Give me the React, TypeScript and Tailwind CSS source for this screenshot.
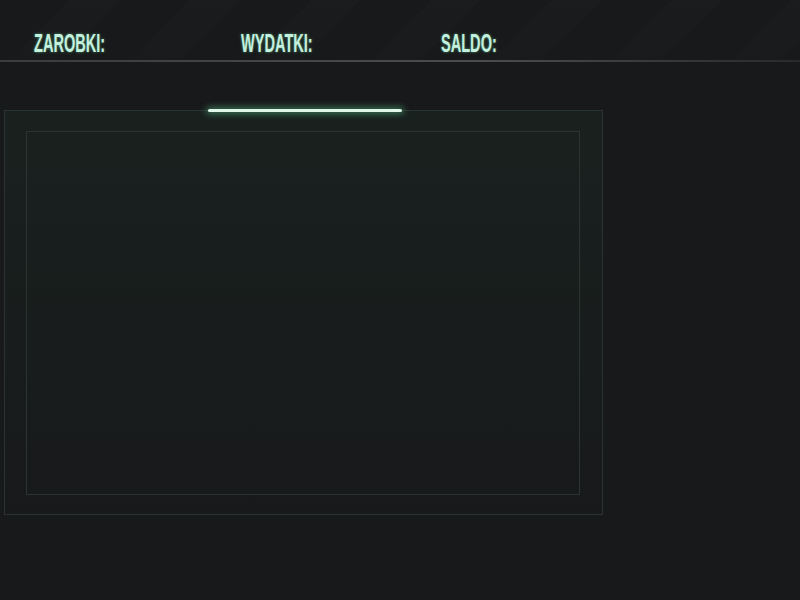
import React from "react";

const labels = [
  { text: "ZAROBKI:", w: "w-[207px]" },
  { text: "WYDATKI:", w: "w-[200px]" },
  { text: "SALDO:", w: "w-[200px]" },
];

export default function App() {
  return (
    <div className="w-[800px] h-[600px] bg-[#18191a] overflow-hidden">
      <header className="relative h-[60px] flex items-start pl-[34px] pt-[30px] bg-[repeating-linear-gradient(135deg,#18191a_0px,#18191a_50px,#1b1c1d_50px,#1b1c1d_85px)]">
        <div className="absolute inset-0 bg-[linear-gradient(180deg,rgba(24,25,26,0)_0%,rgba(24,25,26,0.6)_100%)]" />
        {labels.map((l) => (
          <div
            key={l.text}
            className={`relative ${l.w} text-[26px] font-bold leading-none text-[#c4f0de] [text-shadow:0_0_4px_rgba(110,220,170,0.6)]`}
            style={{ fontFamily: '"Liberation Sans", Arial, sans-serif', transform: "scaleX(0.56)", transformOrigin: "left" }}
          >
            {l.text}
          </div>
        ))}
      </header>
      <div className="h-[2px] bg-[linear-gradient(90deg,#3c3c40,#4c4c50_60%,#2a2a2e)]" />

      <div className="relative ml-[4px] mt-[48px] w-[599px] h-[405px] border border-[#2a3330] bg-[linear-gradient(180deg,#19211f,#18191a)] pt-[20px] pl-[21px] pr-[22px] pb-[19px]">
        <div className="absolute left-[203px] top-[-2px] w-[194px] h-[3px] rounded-full bg-[#e0f8ea] shadow-[0_0_6px_2px_rgba(90,200,140,0.5)]" />
        <div className="w-full h-full border border-[#2b3431]" />
      </div>
    </div>
  );
}
